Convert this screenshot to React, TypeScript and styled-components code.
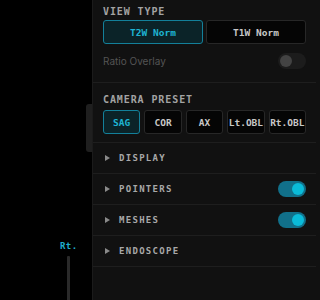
import styled, { createGlobalStyle } from "styled-components";

const GlobalStyle = createGlobalStyle`
  html, body {
    margin: 0;
    padding: 0;
    background: #000;
  }
  * { box-sizing: border-box; }
`;

const MONO = `"DejaVu Sans Mono", "Liberation Mono", monospace`;

const Screen = styled.div`
  display: flex;
  width: 320px;
  height: 300px;
  overflow: hidden;
  background: #000;
`;

const Viewport = styled.div`
  position: relative;
  width: 92px;
  flex: none;
  background: #000;
`;

const OrientLabel = styled.span`
  position: absolute;
  left: 60px;
  top: 241px;
  font-family: ${MONO};
  font-size: 9px;
  font-weight: 700;
  color: #1eaecd;
  letter-spacing: 0.4px;
`;

const OrientLine = styled.div`
  position: absolute;
  left: 67px;
  top: 256px;
  bottom: 0;
  width: 3px;
  background: #2a2a2a;
  border-radius: 1px 1px 0 0;
`;

const Handle = styled.div`
  position: absolute;
  right: 0;
  top: 104px;
  width: 6px;
  height: 48px;
  background: #1f1f1f;
  border-radius: 3px 0 0 3px;
`;

const Panel = styled.aside`
  flex: 1;
  background: #111;
  border-left: 1px solid #1b1b1b;
  padding-right: 4px;
  display: flex;
  flex-direction: column;
`;

const Section = styled.section<{ $top: number; $bottom: number }>`
  padding: ${(p) => p.$top}px 10px ${(p) => p.$bottom}px;
  border-bottom: 1px solid #1e1e1e;
`;

const Title = styled.div<{ $gap: number }>`
  font-family: ${MONO};
  font-size: 10px;
  font-weight: 700;
  line-height: 14px;
  letter-spacing: 0.9px;
  color: #a3a3a3;
  margin-bottom: ${(p) => p.$gap}px;
`;

const ButtonRow = styled.div<{ $cols: number }>`
  display: grid;
  grid-template-columns: repeat(${(p) => p.$cols}, 1fr);
  gap: ${(p) => (p.$cols > 2 ? 4 : 3)}px;
`;

const SegButton = styled.button<{ $active?: boolean }>`
  height: 24px;
  padding: 0;
  border-radius: 3px;
  border: 1px solid ${(p) => (p.$active ? "#13809a" : "#272727")};
  background: ${(p) => (p.$active ? "#0b2328" : "#050505")};
  color: ${(p) => (p.$active ? "#1eb3d2" : "#c8c8c8")};
  font-family: ${MONO};
  font-size: 9.5px;
  font-weight: 700;
  white-space: nowrap;
`;

const OptionRow = styled.div`
  display: flex;
  align-items: center;
  justify-content: space-between;
  margin-top: 9px;
  height: 16px;
`;

const OptionLabel = styled.span`
  font-family: Inter, "Noto Sans", sans-serif;
  font-size: 10px;
  color: #545454;
`;

const Toggle = styled.div<{ $on?: boolean }>`
  width: 28px;
  height: 16px;
  border-radius: 8px;
  padding: 2px;
  display: flex;
  justify-content: ${(p) => (p.$on ? "flex-end" : "flex-start")};
  background: ${(p) => (p.$on ? "#11708a" : "#1c1c1c")};
  &::after {
    content: "";
    width: 12px;
    height: 12px;
    border-radius: 50%;
    background: ${(p) => (p.$on ? "#0abbd9" : "#434343")};
  }
`;

const Group = styled.div`
  height: 31px;
  padding: 0 10px 0 12px;
  display: flex;
  align-items: center;
  border-bottom: 1px solid #1e1e1e;
`;

const Caret = styled.span`
  width: 0;
  height: 0;
  border-top: 3px solid transparent;
  border-bottom: 3px solid transparent;
  border-left: 5px solid #8a8a8a;
  margin-right: 9px;
`;

const GroupLabel = styled.span`
  flex: 1;
  font-family: ${MONO};
  font-size: 9px;
  font-weight: 700;
  letter-spacing: 1.3px;
  color: #a8a8a8;
`;

const groups = [
  { name: "DISPLAY", toggle: false },
  { name: "POINTERS", toggle: true },
  { name: "MESHES", toggle: true },
  { name: "ENDOSCOPE", toggle: false },
];

const presets = ["SAG", "COR", "AX", "Lt.OBL", "Rt.OBL"];

export default function App() {
  return (
    <>
      <GlobalStyle />
      <Screen>
        <Viewport>
          <OrientLabel>Rt.</OrientLabel>
          <OrientLine />
          <Handle />
        </Viewport>
        <Panel>
          <Section $top={5} $bottom={13}>
            <Title $gap={1}>VIEW TYPE</Title>
            <ButtonRow $cols={2}>
              <SegButton $active>T2W Norm</SegButton>
              <SegButton>T1W Norm</SegButton>
            </ButtonRow>
            <OptionRow>
              <OptionLabel>Ratio Overlay</OptionLabel>
              <Toggle />
            </OptionRow>
          </Section>
          <Section $top={10} $bottom={8}>
            <Title $gap={3}>CAMERA PRESET</Title>
            <ButtonRow $cols={5}>
              {presets.map((p, i) => (
                <SegButton key={p} $active={i === 0}>
                  {p}
                </SegButton>
              ))}
            </ButtonRow>
          </Section>
          {groups.map((g) => (
            <Group key={g.name}>
              <Caret />
              <GroupLabel>{g.name}</GroupLabel>
              {g.toggle && <Toggle $on />}
            </Group>
          ))}
        </Panel>
      </Screen>
    </>
  );
}
